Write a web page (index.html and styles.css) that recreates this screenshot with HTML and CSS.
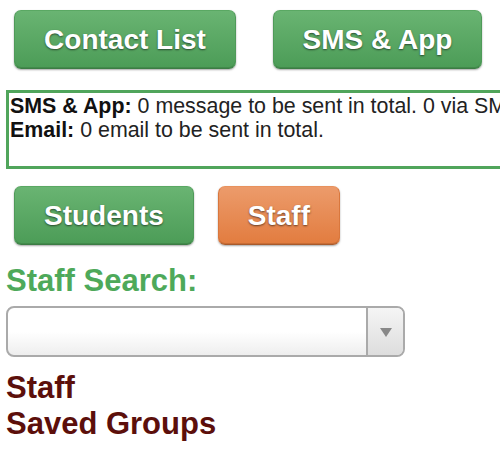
FILE: index.html
```html
<!DOCTYPE html>
<html>
<head>
<meta charset="utf-8">
<link rel="stylesheet" href="styles.css">
</head>
<body>
<div class="page">
  <div class="btn-row top">
    <button class="btn green btn-contact">Contact List</button>
    <button class="btn green btn-sms">SMS &amp; App</button>
  </div>
  <div class="msg-wrap">
    <div class="msg">
      <div><b>SMS &amp; App:</b> 0 message to be sent in total. 0 via SMS, 0 via App.</div>
      <div><b>Email:</b> 0 email to be sent in total.</div>
    </div>
  </div>
  <div class="btn-row second">
    <button class="btn green">Students</button>
    <button class="btn orange">Staff</button>
  </div>
  <h2 class="search-title">Staff Search:</h2>
  <div class="select">
    <div class="select-value"></div>
    <div class="select-arrow"><span class="tri"></span></div>
  </div>
  <div class="group-title">Staff</div>
  <div class="group-title">Saved Groups</div>
</div>
</body>
</html>
```
FILE: styles.css
```css
html, body {
  margin: 0;
  padding: 0;
  background: #fff;
  overflow: hidden;
}
body {
  font-family: "Liberation Sans", Arial, sans-serif;
  color: #222;
}
.page {
  padding: 10px 0 0 6px;
}
.btn-row {
  display: flex;
  padding-left: 8px;
}
.btn-row.top {
  gap: 37px;
}
.btn-row.second {
  gap: 24px;
  margin-top: 17px;
}
.btn {
  box-sizing: border-box;
  height: 59px;
  padding: 0 29px;
  font-family: "Liberation Sans", Arial, sans-serif;
  font-weight: bold;
  font-size: 28px;
  color: #fff;
  white-space: nowrap;
  text-shadow: 0 1px 2px rgba(0, 0, 0, 0.55);
  border-radius: 7px;
  border: 1px solid;
  cursor: pointer;
  line-height: 1;
}
.btn.green {
  background: linear-gradient(#69b472, #4c9c57);
  border-color: #5aa863 #4f9a59 #3c7c44 #4f9a59;
  box-shadow: 0 1px 2px rgba(0, 0, 0, 0.35), inset 0 -1px 0 #428a4b;
}
.btn.orange {
  background: linear-gradient(#ec9b6b, #e27c3f);
  border-color: #e8925e #d9773d #a85a2c #d9773d;
  box-shadow: 0 1px 2px rgba(0, 0, 0, 0.35), inset 0 -1px 0 #c86c35;
}
.btn-contact {
  width: 222px;
  padding: 0;
}
.btn-sms {
  width: 209px;
  padding: 0;
}
.msg-wrap {
  margin-top: 21px;
  overflow: hidden;
}
.msg {
  width: 720px;
  border: 3px solid #50a55b;
  padding: 1px 0 0 1px;
  height: 72px;
  font-size: 21.4px;
  line-height: 24px;
  white-space: nowrap;
  color: #222;
}
.msg b {
  color: #111;
}
.search-title {
  margin: 18px 0 0 0;
  font-size: 31px;
  line-height: 36px;
  font-weight: bold;
  color: #4ea95a;
}
.select {
  margin-top: 7px;
  width: 399px;
  height: 51px;
  box-sizing: border-box;
  border: 2px solid #aaa;
  border-radius: 8px;
  display: flex;
  overflow: hidden;
  background: linear-gradient(#fff 50%, #eee);
}
.select-value {
  flex: 1;
}
.select-arrow {
  width: 35px;
  border-left: 2px solid #aaa;
  background: linear-gradient(#f5f5f5, #ddd);
  display: flex;
  align-items: center;
  justify-content: center;
}
.tri {
  width: 0;
  height: 0;
  border-left: 6px solid transparent;
  border-right: 6px solid transparent;
  border-top: 9px solid #888;
  margin-top: 1px;
}
.group-title {
  font-size: 31px;
  line-height: 36px;
  font-weight: bold;
  color: #5c0f0b;
}
.select + .group-title {
  margin-top: 13px;
}
```
